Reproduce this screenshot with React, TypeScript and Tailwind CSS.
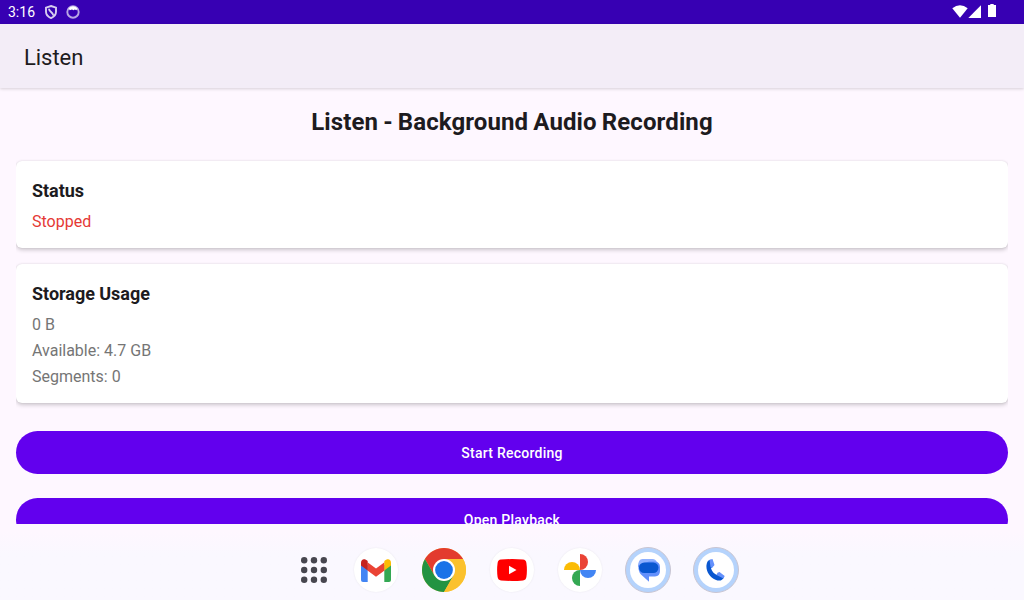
import React from "react";

function StatusBar() {
  return (
    <header className="flex h-6 shrink-0 items-center justify-between bg-[#3700b3] pl-2 pr-7 text-white">
      <div className="flex items-center">
        <span className="w-[27px] whitespace-nowrap text-[14px] leading-6">3:16</span>
        <svg className="ml-[10px] h-[14px] w-3" viewBox="0 0 12 14" fill="none">
          <path d="M6 1 11 2.700v4c0 2.800-2 5-5 6.400-3-1.400-5-3.600-5-6.400v-4Z" stroke="#fff" strokeOpacity=".8" strokeWidth="1.900" />
          <path d="M4 3.800C4 7 8.300 7 8.300 10.500" stroke="#fff" strokeOpacity=".8" strokeWidth="1.900" />
        </svg>
        <svg className="ml-[9px] h-[14px] w-[14px]" viewBox="0 0 14 14" fill="none">
          <circle cx="7" cy="7" r="5.700" stroke="#fff" strokeOpacity=".65" strokeWidth="1.900" />
          <path d="M2.600 3.200Q7-.5 11.400 3.200L10.500 5.300 8.800 4.500 7.500 5.200 6 4.500 3.700 5.300Z" fill="#fff" />
        </svg>
      </div>
      <div className="flex h-6 items-start pt-1">
        <svg className="mt-px h-[13px] w-4" viewBox="0 0 16 13">
          <path d="M.3 3.300Q8-2.700 15.700 3.300L8 12.800Z" fill="#fff" />
        </svg>
        <svg className="mt-px h-[13px] w-[13px]" viewBox="0 0 13 13">
          <path d="M13 .3V13H.3Z" fill="#fff" />
        </svg>
        <svg className="ml-[7px] h-[13px] w-2" viewBox="0 0 8 13">
          <path d="M2.300 0h3.400v1H8v12H0V1h2.300Z" fill="#fff" />
        </svg>
      </div>
    </header>
  );
}

function Card({ title, children }: { title: string; children: React.ReactNode }) {
  return (
    <div className="-my-2 overflow-hidden py-2">
      <section className="rounded-[6px] bg-white px-4 pb-[13px] pt-[18px] shadow-[0_2px_4px_rgba(0,0,0,0.2),0_0_2px_rgba(0,0,0,0.1)]">
        <h2 className="mb-[6px] text-[18px] font-bold leading-6 tracking-[-0.03px] text-[#1d1b20]">{title}</h2>
        {children}
      </section>
    </div>
  );
}

function AppIcon({ children }: { children: React.ReactNode }) {
  return (
    <div className="flex h-11 w-11 items-center justify-center rounded-full bg-white shadow-[0_0_2px_rgba(0,0,0,0.08)]">
      {children}
    </div>
  );
}

function RingIcon({ children }: { children: React.ReactNode }) {
  return (
    <div className="-mx-px flex h-[46px] w-[46px] items-center justify-center rounded-full border border-[#c9c5d2] bg-[#b5d3fc]">
      <div className="flex h-9 w-9 items-center justify-center rounded-full bg-white">{children}</div>
    </div>
  );
}

function Dock() {
  return (
    <nav className="flex h-[76px] shrink-0 items-center justify-center gap-6 bg-linear-to-b from-[#fef7ff] from-10% to-[#faf8ff] to-40% pl-[6px] pt-4">
      <div className="-mr-[6px] flex h-11 w-11 items-center justify-center">
        <svg className="h-7 w-7" viewBox="0 0 28 28" fill="#47464f">
          {[4.200, 14, 23.800].map((y) =>
            [4.200, 14, 23.800].map((x) => <circle key={`${x}-${y}`} cx={x} cy={y} r="3.200" />)
          )}
        </svg>
      </div>
      <AppIcon>
        <svg className="h-[23px] w-[30px]" viewBox="0 0 30 23">
          <path d="M0 6H6.700V23H2Q0 23 0 21Z" fill="#4285f4" />
          <path d="M30 6H23.300V23H28Q30 23 30 21Z" fill="#34a853" />
          <path d="M6.500 3.200 15 9.500 23.500 3.200V11.500L15 17.700 6.500 11.500Z" fill="#ea4335" />
          <path d="M0 6.500V3.700C0 .2 3.500-1 6.700 2V11.600Z" fill="#c5221f" />
          <path d="M30 6.500V3.700C30 .2 26.500-1 23.300 2V11.600Z" fill="#fbbc04" />
        </svg>
      </AppIcon>
      <svg className="h-11 w-11" viewBox="0 0 44 44">
        <circle cx="22" cy="22" r="22" fill="#fcc934" />
        <path d="M22 22 12.500 27.500 2.950 11A22 22 0 0 1 41.050 11H22Z" fill="#e33b2e" />
        <path d="M2.950 11A22 22 0 0 0 22 44L31.530 27.500 22 22 12.470 27.500Z" fill="#229342" />
        <path d="M22 11H41.050A22 22 0 0 1 22 44L31.530 27.500Z" fill="#fbc12d" />
        <circle cx="22" cy="22" r="11" fill="#fff" />
        <circle cx="22" cy="22" r="8.900" fill="#1a73e8" />
      </svg>
      <AppIcon>
        <svg className="h-[22px] w-[30px]" viewBox="0 0 30 22">
          <path d="M4 .6Q15-.4 26 .6 29 .9 29.400 4 30.400 11 29.400 18 29 21.100 26 21.400 15 22.400 4 21.400 1 21.100.6 18-.4 11 .6 4 1 .9 4 .6Z" fill="#f00" />
          <path d="M12 6.700 19.500 11 12 15.300Z" fill="#fff" />
        </svg>
      </AppIcon>
      <AppIcon>
        <svg className="h-8 w-8" viewBox="0 0 32 32">
          <path d="M16 0A8 8 0 0 1 16 16Z" fill="#ea4335" />
          <path d="M32 16A8 8 0 0 1 16 16Z" fill="#4285f4" />
          <path d="M16 32A8 8 0 0 1 16 16Z" fill="#34a853" />
          <path d="M0 16A8 8 0 0 1 16 16Z" fill="#fbbc04" />
        </svg>
      </AppIcon>
      <RingIcon>
        <svg className="ml-[2px] h-6 w-6" viewBox="0 0 24 24">
          <path d="M5.500 1H15.500Q19 1 20 4.500L12 9H1Q1 1 5.500 1Z" fill="#8eb0ff" />
          <path d="M1.500 7 12 3.500H18Q23 4 23 9V13Q23 18 18 18.500H12V23.800L4 16.500Q.8 13 1.500 7Z" fill="#6390fb" />
          <rect x="2" y="4.500" width="19.500" height="10.500" rx="5.200" fill="#0957d0" />
        </svg>
      </RingIcon>
      <RingIcon>
        <svg className="-ml-px h-[22px] w-[19px]" viewBox="0 0 19 22">
          <path d="M4.500.8 7.500 6.500 5 9.500Q7 14.500 11 16L14 14.500 17.800 18.500C16.500 21.500 13.500 22.500 9.500 20.700 3.500 18-.2 12 .5 6 .9 3 2 1 4.500.8Z" fill="#0957d0" />
          <path d="M3.500.8 6.500.1 8.500 6 6 9 4.500 8ZM11.500 13.700 13.500 13 18.700 17 17.500 19.500 10.500 16Z" fill="#6390fb" />
        </svg>
      </RingIcon>
    </nav>
  );
}

export default function App() {
  return (
    <div className="flex h-[600px] w-[1024px] flex-col overflow-hidden bg-[#fef7ff] font-['Roboto',sans-serif] text-[#1d1b20]">
      <StatusBar />
      <div className="z-10 flex h-16 shrink-0 items-center bg-[#f3edf7] px-6 pt-[3px] shadow-[0_1px_3px_rgba(0,0,0,0.16)]">
        <h1 className="text-[22px] leading-7 tracking-[-0.05px]">Listen</h1>
      </div>
      <main className="flex h-[436px] shrink-0 flex-col overflow-hidden px-4 pt-[18px]">
        <h2 className="mb-[23px] text-center text-[24px] font-bold leading-8 tracking-[0.11px] [word-spacing:-1px]">Listen - Background Audio Recording</h2>
        <div className="flex flex-col gap-4">
          <Card title="Status">
            <p className="text-[16px] leading-[26px] text-[#e53935]">Stopped</p>
          </Card>
          <Card title="Storage Usage">
            <div className="text-[16px] leading-[26px] text-[#757575]">
              <p>0 B</p>
              <p>Available: 4.7 GB</p>
              <p>Segments: 0</p>
            </div>
          </Card>
        </div>
        <button className="mt-7 h-[43px] shrink-0 rounded-full bg-[#6200ee] pt-[2px] text-[14px] font-medium tracking-[0.25px] text-white">Start Recording</button>
        <button className="mt-6 h-[43px] shrink-0 rounded-full bg-[#6200ee] pt-[2px] text-[14px] font-medium tracking-[0.25px] text-white">Open Playback</button>
      </main>
      <Dock />
    </div>
  );
}
